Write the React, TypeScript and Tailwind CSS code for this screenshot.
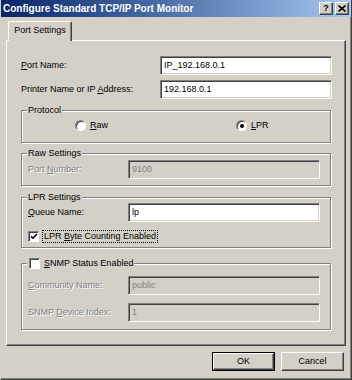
import React from "react";

const FONT = "font-['Liberation_Sans',Arial,sans-serif]";

function U({ children }: { children: React.ReactNode }) {
  return <span className="underline underline-offset-[1px]">{children}</span>;
}

function TextBox({ value, disabled, className }: { value: string; disabled?: boolean; className?: string }) {
  return (
    <div
      className={`flex h-[19px] items-center border border-t-[#808080] border-l-[#808080] border-b-white border-r-white pl-[3px] shadow-[inset_1px_1px_0_#404040,inset_-1px_-1px_0_#d4d0c8] ${
        disabled ? "bg-[#d4d0c8] text-[#808080]" : "bg-white text-black"
      } ${className ?? ""}`}
    >
      {value}
    </div>
  );
}

function Label({ children, disabled, className }: { children: React.ReactNode; disabled?: boolean; className?: string }) {
  return (
    <div className={`${disabled ? "text-[#808080] [text-shadow:1px_1px_0_#fff]" : "text-black"} ${className ?? ""}`}>
      {children}
    </div>
  );
}

function GroupBox({ title, className, children }: { title: React.ReactNode; className?: string; children: React.ReactNode }) {
  return (
    <div className={`relative w-[310px] border border-[#808080] shadow-[inset_1px_1px_0_#fff,1px_1px_0_#fff] ${className ?? ""}`}>
      <div className="absolute -top-[7px] left-[5px] flex items-center bg-[#d4d0c8] px-[1px] leading-[12px]">{title}</div>
      {children}
    </div>
  );
}

function Radio({ checked }: { checked?: boolean }) {
  return (
    <div className="flex h-[11px] w-[11px] items-center justify-center rounded-full border border-t-[#808080] border-l-[#808080] border-b-white border-r-white bg-white shadow-[inset_1px_1px_0_#404040]">
      {checked && <div className="h-[4px] w-[4px] rounded-full bg-black" />}
    </div>
  );
}

function CheckBox({ checked }: { checked?: boolean }) {
  return (
    <div className="flex h-[11px] w-[11px] items-center justify-center border border-t-[#808080] border-l-[#808080] border-b-white border-r-white bg-white shadow-[inset_1px_1px_0_#404040]">
      {checked && (
        <svg width="8" height="7" viewBox="0 0 8 7">
          <path d="M1 3.2 L3 5.2 L7 1" fill="none" stroke="#000" strokeWidth="1.6" />
        </svg>
      )}
    </div>
  );
}

function Button({ children, isDefault }: { children: React.ReactNode; isDefault?: boolean }) {
  const inner = (
    <div className="flex h-full w-full items-center justify-center border border-t-white border-l-white border-r-[#404040] border-b-[#404040] shadow-[inset_-1px_-1px_0_#808080]">
      {children}
    </div>
  );
  return (
    <div className={`h-[19px] w-[63px] ${isDefault ? "border border-black" : ""}`}>{inner}</div>
  );
}

export default function App() {
  return (
    <div
      className={`${FONT} flex h-[380px] w-[352px] flex-col border-l border-r border-b border-l-[#d4d0c8] border-r-[#404040] border-b-[#404040] bg-[#d4d0c8] text-[9px] text-black shadow-[inset_-1px_-1px_0_#808080]`}
    >
      {/* title bar */}
      <div className="flex h-[17px] items-center justify-between bg-gradient-to-r from-[#0a246a] to-[#a6caf0] pl-[2px] pr-[2px]">
        <span className="text-[10px] font-bold text-white">Configure Standard TCP/IP Port Monitor</span>
        <div className="flex gap-[2px]">
          <div className="flex h-[13px] w-[14px] items-center justify-center border border-t-white border-l-white border-r-[#404040] border-b-[#404040] bg-[#d4d0c8] text-[9px] font-bold leading-none shadow-[inset_-1px_-1px_0_#808080]">
            ?
          </div>
          <div className="flex h-[13px] w-[14px] items-center justify-center border border-t-white border-l-white border-r-[#404040] border-b-[#404040] bg-[#d4d0c8] shadow-[inset_-1px_-1px_0_#808080]">
            <svg width="8" height="7" viewBox="0 0 8 7">
              <path d="M0.5 0.5 L7.5 6.5 M7.5 0.5 L0.5 6.5" stroke="#000" strokeWidth="1.6" />
            </svg>
          </div>
        </div>
      </div>

      <div className="flex flex-col px-[5px] pt-[4px]">
        {/* tab strip */}
        <div className="flex h-[19px] items-end pl-[2px]">
          <div className="relative z-10 -mb-[1px] flex h-[20px] w-[64px] items-center justify-center rounded-t-[2px] border-t border-l border-r border-t-white border-l-white border-r-[#404040] bg-[#d4d0c8] pb-[1px] shadow-[inset_-1px_0_0_#808080]">
            Port Settings
          </div>
        </div>

        {/* panel */}
        <div className="flex h-[306px] w-[340px] flex-col border border-t-white border-l-white border-r-[#404040] border-b-[#404040] pl-[14px] pt-[15px] shadow-[inset_-1px_-1px_0_#808080]">
          <div className="flex items-center">
            <Label className="w-[139px]">
              <U>P</U>ort Name:
            </Label>
            <TextBox value="IP_192.168.0.1" className="w-[172px]" />
          </div>
          <div className="mt-[5px] flex items-center">
            <Label className="w-[139px]">
              Printer Name or IP <U>A</U>ddress:
            </Label>
            <TextBox value="192.168.0.1" className="w-[172px]" />
          </div>

          <GroupBox title="Protocol" className="mt-[11px] h-[33px]">
            <div className="grid grid-cols-2 pt-[8px]">
              <div className="flex items-center gap-[4px] pl-[53px]">
                <Radio />
                <span>
                  <U>R</U>aw
                </span>
              </div>
              <div className="flex items-center gap-[4px] pl-[60px]">
                <Radio checked />
                <span>
                  <U>L</U>PR
                </span>
              </div>
            </div>
          </GroupBox>

          <GroupBox title="Raw Settings" className="mt-[10px] h-[33px]">
            <div className="flex items-center pl-[6px] pt-[6px]">
              <Label disabled className="w-[100px]">
                Port <U>N</U>umber:
              </Label>
              <TextBox value="9100" disabled className="w-[192px]" />
            </div>
          </GroupBox>

          <GroupBox title="LPR Settings" className="mt-[11px] h-[51px]">
            <div className="flex items-center pl-[6px] pt-[5px]">
              <Label className="w-[100px]">
                <U>Q</U>ueue Name:
              </Label>
              <TextBox value="lp" className="w-[192px]" />
            </div>
            <div className="mt-[8px] flex items-center gap-[3px] pl-[6px]">
              <CheckBox checked />
              <span className="border border-dotted border-black px-[1px] leading-[11px]">
                LPR <U>B</U>yte Counting Enabled
              </span>
            </div>
          </GroupBox>

          <GroupBox
            title={
              <div className="flex items-center gap-[4px] pl-[1px]">
                <CheckBox />
                <span>
                  <U>S</U>NMP Status Enabled
                </span>
              </div>
            }
            className="mt-[15px] h-[67px]"
          >
            <div className="flex items-center pl-[6px] pt-[12px]">
              <Label disabled className="w-[100px]">
                <U>C</U>ommunity Name:
              </Label>
              <TextBox value="public" disabled className="w-[192px]" />
            </div>
            <div className="mt-[8px] flex items-center pl-[6px]">
              <Label disabled className="w-[100px]">
                SNMP <U>D</U>evice Index:
              </Label>
              <TextBox value="1" disabled className="w-[192px]" />
            </div>
          </GroupBox>
        </div>

        {/* buttons */}
        <div className="mt-[6px] flex w-[340px] justify-end gap-[6px] pr-[2px]">
          <Button isDefault>OK</Button>
          <Button>Cancel</Button>
        </div>
      </div>
    </div>
  );
}
